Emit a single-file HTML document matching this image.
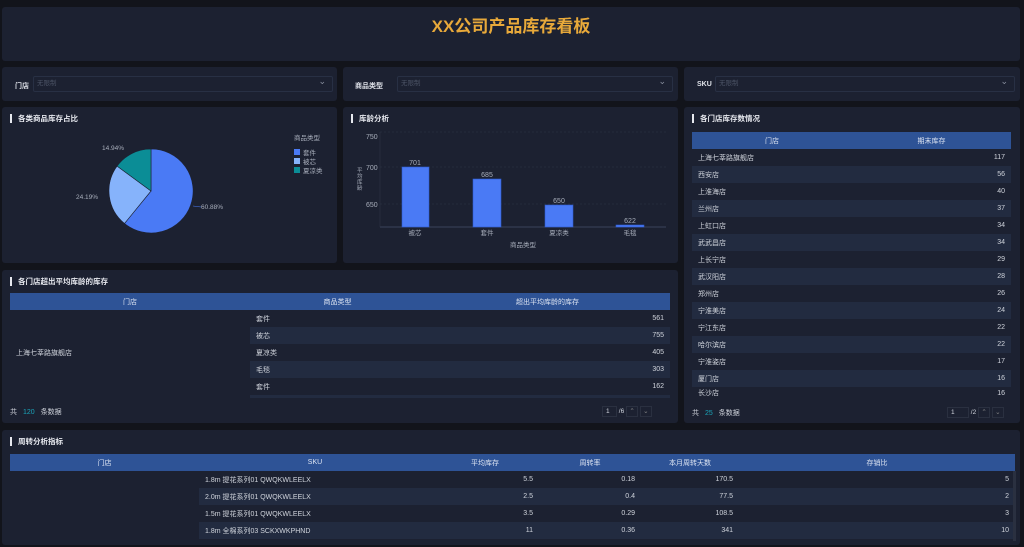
<!DOCTYPE html>
<html><head><meta charset="utf-8"><style>
*{margin:0;padding:0;box-sizing:border-box}
body{width:1024px;height:547px;background:#12141b;font-family:"Liberation Sans","Noto Sans CJK SC",sans-serif;color:#d0d4dc;font-size:7px;position:relative;overflow:hidden}
.p{position:absolute;background:#1c2131;border-radius:3px}
.t{position:absolute;left:8px;top:7px;font-size:7.5px;font-weight:bold;color:#e6e8ee;padding-left:6px;border-left:2px solid #e6e8ee;line-height:9px}
.sel{position:absolute;top:9px;height:16px;border:1px solid #283044;border-radius:2px;color:#4c5466;font-size:6.5px;line-height:14px;padding-left:3px}
.sel:after{content:"⌄";position:absolute;right:6px;top:-3px;color:#8a90a0;font-size:9px}
.lab{position:absolute;top:14px;font-size:7px;font-weight:bold;color:#e0e3ea}
table{border-collapse:collapse;position:absolute;font-size:7px;table-layout:fixed}
th{background:#2e5396;color:#dde4f2;font-weight:normal;height:17px}
td{height:17px;padding:0 6px;vertical-align:middle}
.st{background:#222b40}
.r{text-align:right}
.ft{position:absolute;font-size:7px;color:#d0d4dc}
.ft b{color:#1aa3b8;font-weight:normal;margin:0 6px}
.pg{position:absolute;font-size:6.5px;color:#d0d4dc}
.bx{display:inline-block;width:12px;height:11px;border:1px solid #2a3040;vertical-align:middle;text-align:center;line-height:9px;color:#888}
</style></head><body>
<div class="p" style="left:2px;top:7px;width:1018px;height:54px"><div style="text-align:center;margin-top:5px;font-size:17px;font-weight:bold;color:#e8a93a">XX公司产品库存看板</div></div>

<div class="p" style="left:2px;top:67px;width:335px;height:34px"><span class="lab" style="left:13px">门店</span><div class="sel" style="left:31px;width:300px">无限制</div></div>
<div class="p" style="left:343px;top:67px;width:335px;height:34px"><span class="lab" style="left:12px">商品类型</span><div class="sel" style="left:54px;width:276px">无限制</div></div>
<div class="p" style="left:684px;top:67px;width:336px;height:34px"><span class="lab" style="left:13px">SKU</span><div class="sel" style="left:31px;width:300px">无限制</div></div>

<div class="p" style="left:2px;top:107px;width:335px;height:156px"><div class="t">各类商品库存占比</div></div>
<svg style="position:absolute;left:0;top:0" width="1024" height="547">
<path d="M151,191 L151,149 A42,42 0 1 1 124.5,223.5 Z" fill="#4a7af5" stroke="#1c2131" stroke-width=".6"/>
<path d="M151,191 L124.5,223.5 A42,42 0 0 1 117.1,166.1 Z" fill="#86b3fb" stroke="#1c2131" stroke-width=".6"/>
<path d="M151,191 L117.1,166.1 A42,42 0 0 1 151,149 Z" fill="#0b8d96" stroke="#1c2131" stroke-width=".6"/>
<g font-size="6.5" fill="#a8aebb" font-family="Liberation Sans">
<text x="201" y="209">60.88%</text><text x="76" y="199">24.19%</text><text x="102" y="150">14.94%</text>
<text x="294" y="140">商品类型</text>
<rect x="294" y="149" width="6" height="6" fill="#4a7af5"/><text x="303" y="155">套件</text>
<rect x="294" y="158" width="6" height="6" fill="#86b3fb"/><text x="303" y="164">被芯</text>
<rect x="294" y="167" width="6" height="6" fill="#0b8d96"/><text x="303" y="173">夏凉类</text>
</g>
<path d="M193,206 L201,207" stroke="#4a7af5" fill="none" stroke-width=".6"/>
</svg>

<div class="p" style="left:343px;top:107px;width:335px;height:156px"><div class="t">库龄分析</div></div>
<svg style="position:absolute;left:0;top:0" width="1024" height="547" font-family="Liberation Sans">
<g stroke="#2e3446" stroke-dasharray="2,2" stroke-width=".6"><line x1="380" y1="132" x2="666" y2="132"/><line x1="380" y1="167" x2="666" y2="167"/><line x1="380" y1="204" x2="666" y2="204"/></g>
<line x1="380" y1="227" x2="666" y2="227" stroke="#44506a" stroke-width=".8"/>
<line x1="380" y1="132" x2="380" y2="227" stroke="#2e3446" stroke-width=".6"/>
<g fill="#a8aebb" font-size="7"><text x="366" y="139">750</text><text x="366" y="170">700</text><text x="366" y="207">650</text></g>
<g fill="#4a7af5" stroke="#2e5bd0" stroke-width=".6"><rect x="402" y="167" width="27" height="60"/><rect x="473" y="179" width="28" height="48"/><rect x="545" y="205" width="28" height="22"/><rect x="616" y="225" width="28" height="2"/></g>
<g fill="#a8aebb" font-size="7" text-anchor="middle"><text x="415" y="165">701</text><text x="487" y="177">685</text><text x="559" y="203">650</text><text x="630" y="223">622</text>
<text x="415" y="235" font-size="6.5">被芯</text><text x="487" y="235" font-size="6.5">套件</text><text x="559" y="235" font-size="6.5">夏凉类</text><text x="630" y="235" font-size="6.5">毛毯</text><text x="523" y="247" font-size="6.5">商品类型</text></g>
<g fill="#a8aebb" font-size="5.5"><text x="357" y="172">平</text><text x="357" y="178">均</text><text x="357" y="184">库</text><text x="357" y="190">龄</text></g>
</svg>

<div class="p" style="left:684px;top:107px;width:336px;height:316px"><div class="t">各门店库存数情况</div>
<table style="left:8px;top:25px;width:319px"><tr><th style="width:160px">门店</th><th>期末库存</th></tr>
<tr><td>上海七莘路旗舰店</td><td class="r">117</td></tr>
<tr class="st"><td>西安店</td><td class="r">56</td></tr>
<tr><td>上淮海店</td><td class="r">40</td></tr>
<tr class="st"><td>兰州店</td><td class="r">37</td></tr>
<tr><td>上虹口店</td><td class="r">34</td></tr>
<tr class="st"><td>武武昌店</td><td class="r">34</td></tr>
<tr><td>上长宁店</td><td class="r">29</td></tr>
<tr class="st"><td>武汉阳店</td><td class="r">28</td></tr>
<tr><td>郑州店</td><td class="r">26</td></tr>
<tr class="st"><td>宁淮美店</td><td class="r">24</td></tr>
<tr><td>宁江东店</td><td class="r">22</td></tr>
<tr class="st"><td>哈尔滨店</td><td class="r">22</td></tr>
<tr><td>宁淮姿店</td><td class="r">17</td></tr>
<tr class="st"><td>厦门店</td><td class="r">16</td></tr>
<tr><td style="height:12px">长沙店</td><td class="r" style="height:12px">16</td></tr></table>
<div class="ft" style="left:8px;top:301px">共<b>25</b>条数据</div>
<div class="pg" style="left:263px;top:300px"><span class="bx" style="width:22px;text-align:left;padding-left:3px;color:#d0d4dc">1</span> /2 <span class="bx">⌃</span> <span class="bx">⌄</span></div>
</div>

<div class="p" style="left:2px;top:270px;width:676px;height:153px"><div class="t">各门店超出平均库龄的库存</div>
<table style="left:8px;top:23px;width:660px"><tr><th style="width:240px">门店</th><th style="width:175px">商品类型</th><th>超出平均库龄的库存</th></tr>
<tr><td rowspan="5" style="background:#1c2131;padding-left:6px">上海七莘路旗舰店</td><td>套件</td><td class="r">561</td></tr>
<tr class="st"><td>被芯</td><td class="r">755</td></tr>
<tr><td>夏凉类</td><td class="r">405</td></tr>
<tr class="st"><td>毛毯</td><td class="r">303</td></tr>
<tr><td>套件</td><td class="r">162</td></tr>
<tr class="st"><td style="background:#1c2131;height:3px"></td><td style="height:3px"></td><td style="height:3px"></td></tr></table>
<div class="ft" style="left:8px;top:137px">共<b>120</b>条数据</div>
<div class="pg" style="left:600px;top:136px"><span class="bx" style="width:15px;text-align:left;padding-left:3px;color:#d0d4dc">1</span> /6 <span class="bx">⌃</span> <span class="bx">⌄</span></div>
</div>

<div class="p" style="left:2px;top:430px;width:1018px;height:115px"><div class="t">周转分析指标</div>
<table style="left:8px;top:24px;width:1005px"><tr><th style="width:189px">门店</th><th style="width:232px">SKU</th><th style="width:108px">平均库存</th><th style="width:102px">周转率</th><th style="width:98px">本月周转天数</th><th>存销比</th></tr>
<tr><td></td><td>1.8m 提花系列01 QWQKWLEELX</td><td class="r">5.5</td><td class="r">0.18</td><td class="r">170.5</td><td class="r">5</td></tr>
<tr><td style="background:#1c2131"></td><td class="st">2.0m 提花系列01 QWQKWLEELX</td><td class="st r">2.5</td><td class="st r">0.4</td><td class="st r">77.5</td><td class="st r">2</td></tr>
<tr><td></td><td>1.5m 提花系列01 QWQKWLEELX</td><td class="r">3.5</td><td class="r">0.29</td><td class="r">108.5</td><td class="r">3</td></tr>
<tr><td style="background:#1c2131"></td><td class="st">1.8m 全棉系列03 SCKXWKPHND</td><td class="st r">11</td><td class="st r">0.36</td><td class="st r">341</td><td class="st r">10</td></tr></table>
<div style="position:absolute;left:1011px;top:41px;width:3px;height:70px;background:#2a3040"></div>
</div>
</body></html>
